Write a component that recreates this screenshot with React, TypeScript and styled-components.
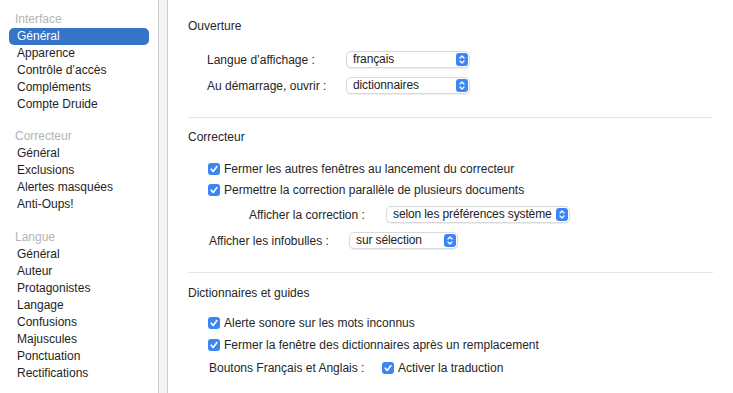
import React from 'react';
import styled, { createGlobalStyle } from 'styled-components';

const Global = createGlobalStyle`
  html, body { margin: 0; padding: 0; background: #fff; }
  body {
    font-family: "Liberation Sans", Arial, Helvetica, sans-serif;
    font-size: 12px;
    color: #262626;
  }
`;

const Window = styled.div`
  display: flex;
  width: 733px;
  height: 393px;
  overflow: hidden;
  background: #fff;
`;

const Sidebar = styled.nav`
  width: 158px;
  flex: none;
  padding-top: 10px;
  box-sizing: border-box;
  display: flex;
  flex-direction: column;
`;

const SideSection = styled.div<{ $gap: number }>`
  display: flex;
  flex-direction: column;
  margin-top: ${p => p.$gap}px;
`;

const SideHeader = styled.div`
  height: 18px;
  line-height: 18px;
  padding-left: 15px;
  color: #b4b4b4;
`;

const SideItem = styled.div<{ $active?: boolean }>`
  height: 17px;
  line-height: 17px;
  margin: 0 9px;
  padding-left: 8px;
  border-radius: 5px;
  background: ${p => (p.$active ? '#3574c8' : 'transparent')};
  color: ${p => (p.$active ? '#fff' : '#1e1e1e')};
`;

const Splitter = styled.div`
  width: 8px;
  flex: none;
  background: #f4f4f4;
  border-left: 1px solid #cdcdcd;
  border-right: 1px solid #cdcdcd;
`;

const Content = styled.main`
  flex: 1;
  padding: 0 20px;
  display: flex;
  flex-direction: column;
`;

const Heading = styled.div<{ $mt: number }>`
  margin-top: ${p => p.$mt}px;
  height: 17px;
  line-height: 17px;
  color: #262626;
`;

const Separator = styled.hr<{ $mt: number }>`
  margin: ${p => p.$mt}px 0 0;
  border: none;
  height: 1px;
  background: #e4e4e4;
`;

const FieldRow = styled.div<{ $mt: number; $indent: number; $labelWidth: number }>`
  margin-top: ${p => p.$mt}px;
  padding-left: ${p => p.$indent}px;
  display: grid;
  grid-template-columns: ${p => p.$labelWidth}px auto;
  align-items: center;
  height: 17px;
`;

const Label = styled.span`
  white-space: nowrap;
  color: #262626;
`;

const SelectBox = styled.div<{ $w: number }>`
  width: ${p => p.$w}px;
  height: 17px;
  box-sizing: border-box;
  border: 1px solid #d9d9d9;
  border-radius: 5px;
  box-shadow: 0 1px 1px rgba(0, 0, 0, 0.07);
  background: #fff;
  display: flex;
  align-items: center;
  justify-content: space-between;
  padding: 0 1px 0 6px;
  color: #222;
  line-height: 15px;
`;

const SelectValue = styled.span`
  white-space: nowrap;
  overflow: hidden;
  letter-spacing: -0.12px;
`;

const Stepper = styled.span`
  width: 12px;
  height: 13px;
  border-radius: 3px;
  background: #3b86f4;
  display: flex;
  align-items: center;
  justify-content: center;
  flex: none;
`;

const CheckRow = styled.label<{ $mt: number; $indent: number }>`
  margin-top: ${p => p.$mt}px;
  padding-left: ${p => p.$indent}px;
  display: flex;
  align-items: center;
  gap: 4px;
  height: 17px;
  white-space: nowrap;
  color: #262626;
`;

const InlineCheck = styled.span`
  display: flex;
  align-items: center;
  gap: 4px;
`;

const CheckBox = styled.span`
  width: 12px;
  height: 12px;
  border-radius: 3px;
  background: #3b86f4;
  display: flex;
  align-items: center;
  justify-content: center;
  flex: none;
`;

const StepIcon = () => (
  <svg width="8" height="11" viewBox="0 0 8 11" fill="none">
    <path d="M2 4 L4 2 L6 4" stroke="#fff" strokeWidth="1.3" strokeLinecap="round" strokeLinejoin="round" />
    <path d="M2 7 L4 9 L6 7" stroke="#fff" strokeWidth="1.3" strokeLinecap="round" strokeLinejoin="round" />
  </svg>
);

const CheckIcon = () => (
  <svg width="10" height="10" viewBox="0 0 10 10" fill="none">
    <path d="M2.2 5.2 L4.2 7.4 L7.9 2.6" stroke="#fff" strokeWidth="1.6" strokeLinecap="round" strokeLinejoin="round" />
  </svg>
);

const Select = ({ value, width }: { value: string; width: number }) => (
  <SelectBox $w={width}>
    <SelectValue>{value}</SelectValue>
    <Stepper><StepIcon /></Stepper>
  </SelectBox>
);

const Check = ({ children, mt }: { children: React.ReactNode; mt: number }) => (
  <CheckRow $mt={mt} $indent={20}>
    <CheckBox><CheckIcon /></CheckBox>
    <span>{children}</span>
  </CheckRow>
);

const sections = [
  { title: 'Interface', gap: 0, items: ['Général', 'Apparence', 'Contrôle d’accès', 'Compléments', 'Compte Druide'] },
  { title: 'Correcteur', gap: 14, items: ['Général', 'Exclusions', 'Alertes masquées', 'Anti-Oups!'] },
  { title: 'Langue', gap: 15, items: ['Général', 'Auteur', 'Protagonistes', 'Langage', 'Confusions', 'Majuscules', 'Ponctuation', 'Rectifications'] },
];

export default function App() {
  return (
    <>
      <Global />
      <Window>
        <Sidebar>
          {sections.map((s, si) => (
            <SideSection key={s.title} $gap={s.gap}>
              <SideHeader>{s.title}</SideHeader>
              {s.items.map((it, i) => (
                <SideItem key={it + i} $active={si === 0 && i === 0}>{it}</SideItem>
              ))}
            </SideSection>
          ))}
        </Sidebar>
        <Splitter />
        <Content>
          <Heading $mt={18}>Ouverture</Heading>
          <FieldRow $mt={16} $indent={19} $labelWidth={139}>
            <Label>Langue d’affichage :</Label>
            <Select value="français" width={124} />
          </FieldRow>
          <FieldRow $mt={9} $indent={19} $labelWidth={139}>
            <Label>Au démarrage, ouvrir :</Label>
            <Select value="dictionnaires" width={124} />
          </FieldRow>
          <Separator $mt={23} />

          <Heading $mt={11}>Correcteur</Heading>
          <Check mt={14}>Fermer les autres fenêtres au lancement du correcteur</Check>
          <Check mt={4}>Permettre la correction parallèle de plusieurs documents</Check>
          <FieldRow $mt={8} $indent={61} $labelWidth={137}>
            <Label>Afficher la correction :</Label>
            <Select value="selon les préférences système" width={184} />
          </FieldRow>
          <FieldRow $mt={9} $indent={21} $labelWidth={140}>
            <Label>Afficher les infobulles :</Label>
            <Select value="sur sélection" width={109} />
          </FieldRow>
          <Separator $mt={23} />

          <Heading $mt={12}>Dictionnaires et guides</Heading>
          <Check mt={12}>Alerte sonore sur les mots inconnus</Check>
          <Check mt={5}>Fermer la fenêtre des dictionnaires après un remplacement</Check>
          <FieldRow $mt={6} $indent={21} $labelWidth={173}>
            <Label>Boutons Français et Anglais :</Label>
            <InlineCheck>
              <CheckBox><CheckIcon /></CheckBox>
              <span>Activer la traduction</span>
            </InlineCheck>
          </FieldRow>
        </Content>
      </Window>
    </>
  );
}
